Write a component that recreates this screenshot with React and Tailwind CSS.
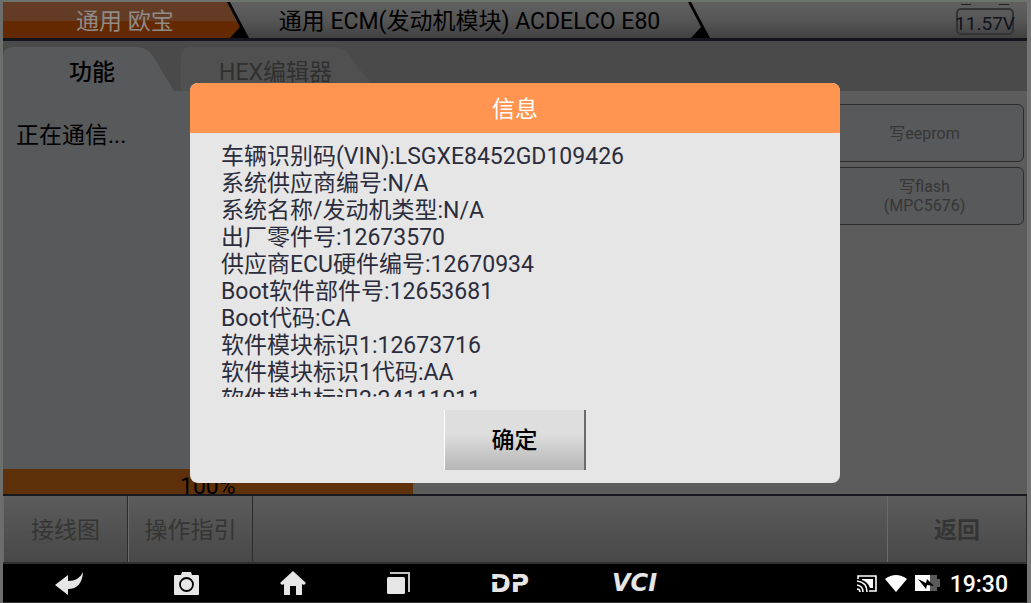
import React from "react";

const INFO = [
  "车辆识别码(VIN):LSGXE8452GD109426",
  "系统供应商编号:N/A",
  "系统名称/发动机类型:N/A",
  "出厂零件号:12673570",
  "供应商ECU硬件编号:12670934",
  "Boot软件部件号:12653681",
  "Boot代码:CA",
  "软件模块标识1:12673716",
  "软件模块标识1代码:AA",
  "软件模块标识2:24111011",
];

function Divider({ filled }) {
  return (
    <svg className="h-9 w-[22px] shrink-0" viewBox="0 0 22 36" aria-hidden="true">
      {filled && (
        <>
          <path d="M0 0H1L11 19H0Z" fill="#643c26" />
          <path d="M0 19H11L14 25L4 36H0Z" fill="#642900" />
        </>
      )}
      <path d="M0 0H3L22 36H3L13 25Z" fill="#000" />
    </svg>
  );
}

function Header() {
  return (
    <header className="flex h-[39px] items-start border-b-[3px] border-[#14141c] bg-linear-to-b from-[#606060] via-[#565656] to-[#414141]">
      <a
        href="#brand"
        className="flex h-9 shrink-0 items-center bg-linear-to-b from-[#643c26] from-53% to-[#642900] to-53% pl-[73px] pr-[53px] pt-1 text-[23px] text-[#8f8b88]"
      >
        通用 欧宝
      </a>
      <Divider filled />
      <a href="#module" className="flex h-9 shrink-0 items-center pl-[30px] pr-7 pt-1 text-[23px] text-black">
        通用 ECM(发动机模块) ACDELCO E80
      </a>
      <Divider />
      <div className="ml-auto mr-[13px] flex flex-col pt-0.5">
        <div className="flex justify-between px-[5px]">
          <span className="h-px w-2.5 bg-[#222]" />
          <span className="h-px w-2.5 bg-[#222]" />
        </div>
        <div className="mt-[3px] flex h-[27px] w-[58px] items-center justify-center rounded-[5px] border-2 border-[#333] pt-1 text-[19px] leading-none text-[#12121e]">
          11.57V
        </div>
      </div>
    </header>
  );
}

function Tabs() {
  return (
    <div role="tablist" className="flex h-[50px] items-end gap-[7px] bg-[#4a4a4a]">
      <button role="tab" aria-selected="true" className="relative h-11 w-[171px] pt-2 text-left">
        <svg className="absolute inset-0 size-full" viewBox="0 0 171 44" preserveAspectRatio="none" aria-hidden="true">
          <path d="M0 44V10Q0 0 10 0H133Q144 0 150 9L171 44Z" fill="#58595b" />
        </svg>
        <span className="relative pl-[66px] text-[23px] font-medium text-black">功能</span>
      </button>
      <button role="tab" aria-selected="false" className="relative h-11 w-[195px] pt-2 text-left">
        <svg className="absolute inset-0 size-full" viewBox="0 0 195 44" preserveAspectRatio="none" aria-hidden="true">
          <path d="M0 44V10Q0 0 10 0H152Q163 0 169 9L195 44Z" fill="#505050" />
        </svg>
        <span className="relative pl-[38px] text-[23px] text-[#303030]">HEX编辑器</span>
      </button>
    </div>
  );
}

function FlashButton({ children }) {
  return (
    <button className="h-[58px] rounded-md border border-[#2c2c2c] bg-[#58595b] text-base leading-[19px] text-[#363636]">
      {children}
    </button>
  );
}

function Toolbar() {
  const item = "border-r border-r-[#2b2b2b] border-l border-l-[#6a6a6a] pt-1 text-[23px] text-[#353535]";
  return (
    <div className="flex h-[70px] border-t-2 border-b-2 border-t-[#17191e] border-b-[#303030] bg-linear-to-b from-[#5c5c5c] to-[#484848]">
      <button className={item + " w-[125px]"}>接线图</button>
      <button className={item + " w-[125px]"}>操作指引</button>
      <div className="flex-1" />
      <button className={item + " w-[140px] font-bold"}>返回</button>
    </div>
  );
}

function NavBar() {
  return (
    <nav className="flex h-[39px] shrink-0 items-center border-b border-[#333] bg-black pl-[52px] pr-[19px] text-[#e6e6e6]">
      <div className="flex items-center gap-[81px]">
        <button aria-label="后退" className="w-[38px]">
          <svg className="h-[23px] w-7" viewBox="0 0 28 23" fill="currentColor">
            <path d="M0 13L13 3V9Q24 9 28 0Q27 17 13 17V23Z" />
          </svg>
        </button>
        <button aria-label="截图">
          <svg className="h-[23px] w-[25px]" viewBox="0 0 25 23">
            <path d="M1 3H7L8 0H17L18 3H24Q25 3 25 4V22Q25 23 24 23H1Q0 23 0 22V4Q0 3 1 3Z" fill="currentColor" />
            <circle cx="12.5" cy="12.5" r="6.5" fill="none" stroke="#000" strokeWidth="1.8" />
          </svg>
        </button>
        <button aria-label="主页">
          <svg className="h-6 w-[26px]" viewBox="0 0 26 24" fill="currentColor">
            <path d="M13 0L26 12L24 14L22 13V24H16V15H10V24H4V13L2 14L0 12Z" />
          </svg>
        </button>
        <button aria-label="最近任务">
          <svg className="h-[22px] w-[23px]" viewBox="0 0 23 22">
            <path d="M3 1H22V20" fill="none" stroke="#c4c4c4" strokeWidth="2" />
            <rect y="5" width="18" height="17" rx="1.5" fill="currentColor" />
          </svg>
        </button>
        <button aria-label="DP">
          <svg className="h-[18px] w-10 overflow-visible" viewBox="0 0 40 18" fill="currentColor">
            <text x="-1" y="18" fontSize="25" fontWeight="bold" fontFamily="DejaVu Sans">DP</text>
            <path d="M-1 5H14V8H-1ZM20 5H31V8H20Z" fill="#000" />
          </svg>
        </button>
        <button aria-label="VCI" className="font-['DejaVu_Sans',sans-serif] text-2xl font-bold italic leading-none">
          VCI
        </button>
      </div>
      <div className="ml-auto flex items-center gap-2">
        <svg className="h-[17px] w-5" viewBox="0 0 20 17" fill="none" stroke="#fff" strokeWidth="1.6" aria-hidden="true">
          <path d="M1 4V1H19V16H12" />
          <path d="M5 4H16V13H13Q11 7 5 5Z" fill="#fff" stroke="none" />
          <path d="M0 6Q10 7 10 17M0 10Q6 11 6 17M0 14Q3 14 3 17" />
        </svg>
        <svg className="h-[17px] w-[22px]" viewBox="0 0 22 17" fill="#fff" aria-hidden="true">
          <path d="M0 4Q11 -4 22 4L11 17Z" />
        </svg>
        <svg className="h-4 w-[25px]" viewBox="0 0 25 16" aria-hidden="true">
          <path d="M0 0H15V16H0Z" fill="#fff" />
          <path d="M15 0H22V4H25V12H22V16H15Z" fill="#5a5a5a" />
          <path d="M3 4L11 8L12 4L19 11L12 10L11 14Z" fill="#000" />
        </svg>
        <time className="pl-0.5 pt-0.5 text-[23px] font-medium leading-none text-white">19:30</time>
      </div>
    </nav>
  );
}

function InfoDialog() {
  return (
    <div className="absolute inset-0 flex items-center justify-center">
      <section
        role="dialog"
        aria-modal="true"
        aria-labelledby="info-title"
        className="flex h-[400px] w-[650px] flex-col overflow-hidden rounded-lg bg-[#e6e6e6]"
      >
        <h2 id="info-title" className="flex h-[50px] shrink-0 items-center justify-center bg-[#ff9550] pt-1 text-[23px] text-white">
          信息
        </h2>
        <div className="mt-2.5 h-[254px] overflow-hidden px-[31px] text-[23px] leading-[27px] text-[#2b2d3c]">
          {INFO.map((line) => (
            <p key={line}>{line}</p>
          ))}
        </div>
        <button className="mt-[13px] h-[60px] w-[142px] self-center border-l border-r-2 border-l-white border-r-[#6a6a6a] bg-linear-to-b from-[#dedede] from-40% to-[#b6b6b6] pt-[3px] text-[23px] font-medium text-black">
          确定
        </button>
      </section>
    </div>
  );
}

export default function App() {
  return (
    <div className="flex min-h-screen flex-col border-l-[3px] border-r-4 border-t-2 border-l-[#6c6e6c] border-r-[#747474] border-t-[#6c726c] bg-[#5c5c5c] font-[Roboto,'Noto_Sans_CJK_SC',sans-serif]">
      <div className="relative flex flex-1 flex-col">
        <Header />
        <Tabs />
        <main className="flex flex-1">
          <p className="flex-1 bg-[#58595b] pl-[13px] pt-7 text-[23px] text-black">正在通信...</p>
          <div className="flex w-[205px] flex-col gap-[5px] pl-[3px] pr-[3px] pt-[13px]">
            <FlashButton>写eeprom</FlashButton>
            <FlashButton>
              写flash
              <br />
              (MPC5676)
            </FlashButton>
          </div>
        </main>
        <div role="progressbar" aria-valuenow={100} className="h-[25px] bg-[#5c5c5c]">
          <div className="h-full w-2/5 overflow-hidden bg-[#5f310b] pt-1 text-center text-[23px] leading-[27px] text-black">
            100%
          </div>
        </div>
        <Toolbar />
        <InfoDialog />
      </div>
      <NavBar />
    </div>
  );
}
